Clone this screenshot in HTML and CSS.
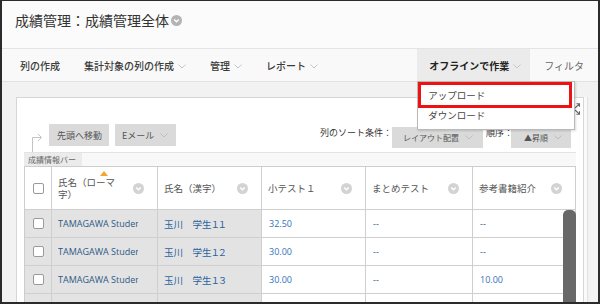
FILE: index.html
```html
<!DOCTYPE html>
<html lang="ja">
<head>
<meta charset="utf-8">
<title>成績管理全体</title>
<link rel="stylesheet" href="styles.css">
</head>
<body>
<div class="frame">
  <header class="page-head">
    <h1 class="title">成績管理：成績管理全体</h1>
    <svg class="title-icon" width="11" height="11" viewBox="0 0 11 11"><circle cx="5.5" cy="5.5" r="5.5" fill="#b4b4b4"/><polyline points="3.2,4.5 5.5,6.8 7.8,4.5" fill="none" stroke="#fff" stroke-width="1.4"/></svg>
  </header>

  <nav class="nav">
    <div class="nav-item">列の作成</div>
    <div class="nav-item">集計対象の列の作成<svg class="chev" width="8" height="5" viewBox="0 0 8 5"><polyline points="0.5,0.5 4,4 7.5,0.5" fill="none" stroke="#c6c6c6"/></svg></div>
    <div class="nav-item">管理<svg class="chev" width="8" height="5" viewBox="0 0 8 5"><polyline points="0.5,0.5 4,4 7.5,0.5" fill="none" stroke="#c6c6c6"/></svg></div>
    <div class="nav-item">レポート<svg class="chev" width="8" height="5" viewBox="0 0 8 5"><polyline points="0.5,0.5 4,4 7.5,0.5" fill="none" stroke="#c6c6c6"/></svg></div>
    <div class="nav-item active">オフラインで作業<svg class="chev" width="8" height="5" viewBox="0 0 8 5"><polyline points="0.5,0.5 4,4 7.5,0.5" fill="none" stroke="#c6c6c6"/></svg>
      <div class="dropdown">
        <div class="dd-item selected">アップロード</div>
        <div class="dd-item">ダウンロード</div>
      </div>
    </div>
    <div class="nav-item plain">フィルタ</div>
  </nav>

  <main class="content">
    <section class="panel">
      <svg class="expand-icon" width="7" height="12" viewBox="0 0 7 12"><path d="M1 5L5.5 0.8M2.5 0.8H5.5V3.8" fill="none" stroke="#666" stroke-width="1.1"/><path d="M1 7L5.5 11.2M2.5 11.2H5.5V8.2" fill="none" stroke="#666" stroke-width="1.1"/></svg>

      <div class="toolbar">
        <div class="tool-left">
          <svg class="jump-arrow" width="25" height="28" viewBox="0 0 25 28"><path d="M8.5 28V13.5H17" fill="none" stroke="#c4c4c4"/><path d="M14 10l3.5 3.5L14 17" fill="none" stroke="#c4c4c4"/></svg>
          <div class="btn">先頭へ移動</div>
          <div class="btn btn-menu">Eメール<svg class="btn-chev" width="8" height="5" viewBox="0 0 8 5"><polyline points="0.5,0.5 4,4 7.5,0.5" fill="none" stroke="#bdbdbd"/></svg></div>
        </div>
        <div class="tool-right">
          <span class="sort-label">列のソート条件：</span>
          <div class="btn btn-sort layout">レイアウト配置<svg class="btn-chev" width="8" height="5" viewBox="0 0 8 5"><polyline points="0.5,0.5 4,4 7.5,0.5" fill="none" stroke="#bdbdbd"/></svg></div>
          <span class="sort-label order">順序：</span>
          <div class="btn btn-sort asc">▲昇順<svg class="btn-chev" width="8" height="5" viewBox="0 0 8 5"><polyline points="0.5,0.5 4,4 7.5,0.5" fill="none" stroke="#bdbdbd"/></svg></div>
        </div>
      </div>

      <div class="infobar"><span class="info-tab">成績情報バー</span></div>

      <div class="grade-grid">
        <div class="hcell check-cell"><span class="checkbox"></span></div>
        <div class="hcell sorted">
          <svg class="sort-tri" width="8" height="5" viewBox="0 0 8 5"><polygon points="0,5 4,0 8,5" fill="#f2a531"/></svg>
          <span class="htext">氏名（ローマ字）</span>
          <svg class="hicon" width="11" height="11" viewBox="0 0 11 11"><circle cx="5.5" cy="5.5" r="5.5" fill="#d3d3d3"/><polyline points="3.2,4.5 5.5,6.8 7.8,4.5" fill="none" stroke="#fff" stroke-width="1.4"/></svg>
        </div>
        <div class="hcell">
          <span class="htext">氏名（漢字）</span>
          <svg class="hicon" width="11" height="11" viewBox="0 0 11 11"><circle cx="5.5" cy="5.5" r="5.5" fill="#d3d3d3"/><polyline points="3.2,4.5 5.5,6.8 7.8,4.5" fill="none" stroke="#fff" stroke-width="1.4"/></svg>
        </div>
        <div class="hcell">
          <span class="htext">小テスト１</span>
          <svg class="hicon" width="11" height="11" viewBox="0 0 11 11"><circle cx="5.5" cy="5.5" r="5.5" fill="#d3d3d3"/><polyline points="3.2,4.5 5.5,6.8 7.8,4.5" fill="none" stroke="#fff" stroke-width="1.4"/></svg>
        </div>
        <div class="hcell">
          <span class="htext">まとめテスト</span>
          <svg class="hicon" width="11" height="11" viewBox="0 0 11 11"><circle cx="5.5" cy="5.5" r="5.5" fill="#d3d3d3"/><polyline points="3.2,4.5 5.5,6.8 7.8,4.5" fill="none" stroke="#fff" stroke-width="1.4"/></svg>
        </div>
        <div class="hcell">
          <span class="htext">参考書籍紹介</span>
          <svg class="hicon" width="11" height="11" viewBox="0 0 11 11"><circle cx="5.5" cy="5.5" r="5.5" fill="#d3d3d3"/><polyline points="3.2,4.5 5.5,6.8 7.8,4.5" fill="none" stroke="#fff" stroke-width="1.4"/></svg>
        </div>

        <div class="cell gray check-cell"><span class="checkbox"></span></div>
        <div class="cell gray"><span class="clip roman">TAMAGAWA Student11</span></div>
        <div class="cell gray kanji">玉川　学生１１</div>
        <div class="cell num">32.50</div>
        <div class="cell num dash">--</div>
        <div class="cell num dash">--</div>

        <div class="cell gray check-cell"><span class="checkbox"></span></div>
        <div class="cell gray"><span class="clip roman">TAMAGAWA Student12</span></div>
        <div class="cell gray kanji">玉川　学生１２</div>
        <div class="cell num">30.00</div>
        <div class="cell num dash">--</div>
        <div class="cell num dash">--</div>

        <div class="cell gray check-cell"><span class="checkbox"></span></div>
        <div class="cell gray"><span class="clip roman">TAMAGAWA Student13</span></div>
        <div class="cell gray kanji">玉川　学生１３</div>
        <div class="cell num">30.00</div>
        <div class="cell num dash">--</div>
        <div class="cell num">10.00</div>

        <div class="cell gray check-cell"><span class="checkbox"></span></div>
        <div class="cell gray"><span class="clip roman">TAMAGAWA Student14</span></div>
        <div class="cell gray kanji">玉川　学生１４</div>
        <div class="cell num dash">--</div>
        <div class="cell num dash">--</div>
        <div class="cell num dash">--</div>

        <div class="scrollbar"></div>
      </div>
    </section>
  </main>
</div>
</body>
</html>
```

FILE: styles.css
```css
* {
  box-sizing: border-box;
  margin: 0;
  padding: 0;
}

html, body {
  width: 600px;
  height: 304px;
  overflow: hidden;
  background: #fff;
}

body {
  font-family: "Noto Sans CJK JP", "Open Sans", sans-serif;
  color: #333;
}

.frame {
  width: 600px;
  height: 304px;
  border: 2px solid #2b2b2b;
  border-top-width: 1px;
  overflow: hidden;
  display: flex;
  flex-direction: column;
  background: #f2f2f2;
}

/* ---------- page header ---------- */
.page-head {
  flex: none;
  height: 48px;
  border-bottom: 1px solid #e4e4e4;
  background: #fbfbfb;
  display: flex;
  align-items: flex-start;
  padding: 9px 0 0 13px;
}

.title {
  font-size: 14px;
  line-height: 20px;
  font-weight: 400;
  color: #333;
}

.title-icon {
  margin: 5px 0 0 2px;
}

/* ---------- nav ---------- */
.nav {
  flex: none;
  height: 33px;
  border-bottom: 1px solid #e2e2e2;
  background: #f9f9f9;
  display: flex;
  align-items: stretch;
  padding-left: 18px;
  font-size: 10px;
  position: relative;
  z-index: 5;
}

.nav-item {
  display: flex;
  align-items: center;
  margin-right: 24px;
  color: #3a3a3a;
  font-weight: 500;
  white-space: nowrap;
  position: relative;
}

.chev {
  margin-left: 4px;
  margin-top: 2px;
}

.nav-item.active {
  margin-left: auto;
  margin-right: 0;
  padding: 0 9px 0 12px;
  background: #ebebeb;
  font-weight: 700;
  color: #222;
}

.nav-item.plain {
  margin-right: 0;
  padding: 0 14px;
  font-weight: 400;
  color: #666;
}

.dropdown {
  position: absolute;
  top: 100%;
  left: 0;
  width: 158px;
  background: #fff;
  border: 1px solid #b9b9b9;
  box-shadow: 1px 1px 2px rgba(0, 0, 0, 0.15);
  padding: 3px 5px 4px 3px;
  font-weight: 400;
  font-size: 9.5px;
  color: #444;
}

.dd-item {
  height: 20px;
  line-height: 20px;
  padding-left: 7px;
}

.dd-item.selected {
  outline: 3px solid #ee1313;
}

/* ---------- content ---------- */
.content {
  flex: 1;
  min-height: 0;
  padding: 15px 14px 0 14px;
}

.panel {
  position: relative;
  background: #fff;
  border: 1px solid #d6d6d6;
  padding: 0 7px;
  box-shadow: 3px 0 0 #fafafa, 4px 0 0 #e2e2e2;
}

.expand-icon {
  position: absolute;
  top: 5px;
  right: 2px;
}

.toolbar {
  height: 54px;
  padding-top: 26px;
  display: flex;
  justify-content: space-between;
  align-items: flex-start;
}

.tool-left {
  display: flex;
  align-items: flex-start;
}

.jump-arrow {
  display: block;
}

.btn {
  display: flex;
  align-items: center;
  height: 22px;
  padding: 0 7px 0 8px;
  background: #dadada;
  font-size: 9px;
  color: #555;
  white-space: nowrap;
}

.btn-menu {
  margin-left: 6px;
  padding: 0 8px 0 7px;
}

.btn-chev {
  margin-left: 6px;
}

.tool-right {
  display: flex;
  align-items: flex-start;
  margin-top: 3px;
  margin-right: 5px;
}

.sort-label {
  font-size: 9px;
  line-height: 12px;
  color: #333;
  white-space: nowrap;
}

.sort-label.order {
  margin-left: 3px;
}

.btn-sort {
  height: 21px;
  font-size: 8px;
}

.btn-sort.layout {
  padding: 0 10px 0 11px;
}

.btn-sort.asc {
  margin-left: -2px;
  padding: 0 9px 0 13px;
}

.infobar {
  height: 14px;
  border-top: 1px solid #e3e3e3;
  background: #f8f8f8;
  display: flex;
}

.info-tab {
  width: 58px;
  background: #ebebeb;
  font-size: 8px;
  line-height: 13px;
  color: #666;
  padding-left: 4px;
  white-space: nowrap;
}

/* ---------- grade grid ---------- */
.grade-grid {
  position: relative;
  display: grid;
  grid-template-columns: 27px 106px 104px 104px 107px 103px;
  grid-auto-rows: 28px;
  grid-template-rows: 43px;
  border-top: 1px solid #cdcdcd;
  border-left: 1px solid #cdcdcd;
}

.hcell {
  position: relative;
  display: flex;
  align-items: center;
  padding: 0 13px 0 6px;
  border-right: 1px solid #cfcfcf;
  border-bottom: 1px solid #cfcfcf;
  background: #fff;
}

.htext {
  flex: 1;
  margin-right: 10px;
  font-size: 9.5px;
  line-height: 12px;
  color: #555;
}

.hicon {
  flex: none;
}

.sort-tri {
  position: absolute;
  left: 48px;
  top: 4px;
}

.check-cell {
  justify-content: center;
  padding: 0;
}

.checkbox {
  display: block;
  width: 11px;
  height: 11px;
  border: 1px solid #9a9a9a;
  border-radius: 2px;
  background: #fff;
}

.cell {
  display: flex;
  align-items: center;
  padding: 0 6px;
  border-right: 1px solid #cfcfcf;
  border-bottom: 1px solid #cfcfcf;
  background: #fff;
  white-space: nowrap;
  overflow: hidden;
}

.cell.gray {
  background: #e3e3e3;
}

.clip {
  display: block;
  width: 80px;
  overflow: hidden;
}

.roman {
  font-family: "Open Sans", sans-serif;
  font-size: 9px;
  color: #2d5a85;
}

.kanji {
  font-size: 9.5px;
  color: #2c63a0;
  font-feature-settings: "palt";
}

.num {
  padding-left: 7px;
  font-family: "Open Sans", sans-serif;
  font-size: 9px;
  color: #3274b9;
}

.num.dash {
  color: #2d5a85;
}

.scrollbar {
  position: absolute;
  top: 43px;
  right: 0;
  width: 13px;
  height: 120px;
  background: #686868;
  border-radius: 5px 5px 0 0;
}
```
